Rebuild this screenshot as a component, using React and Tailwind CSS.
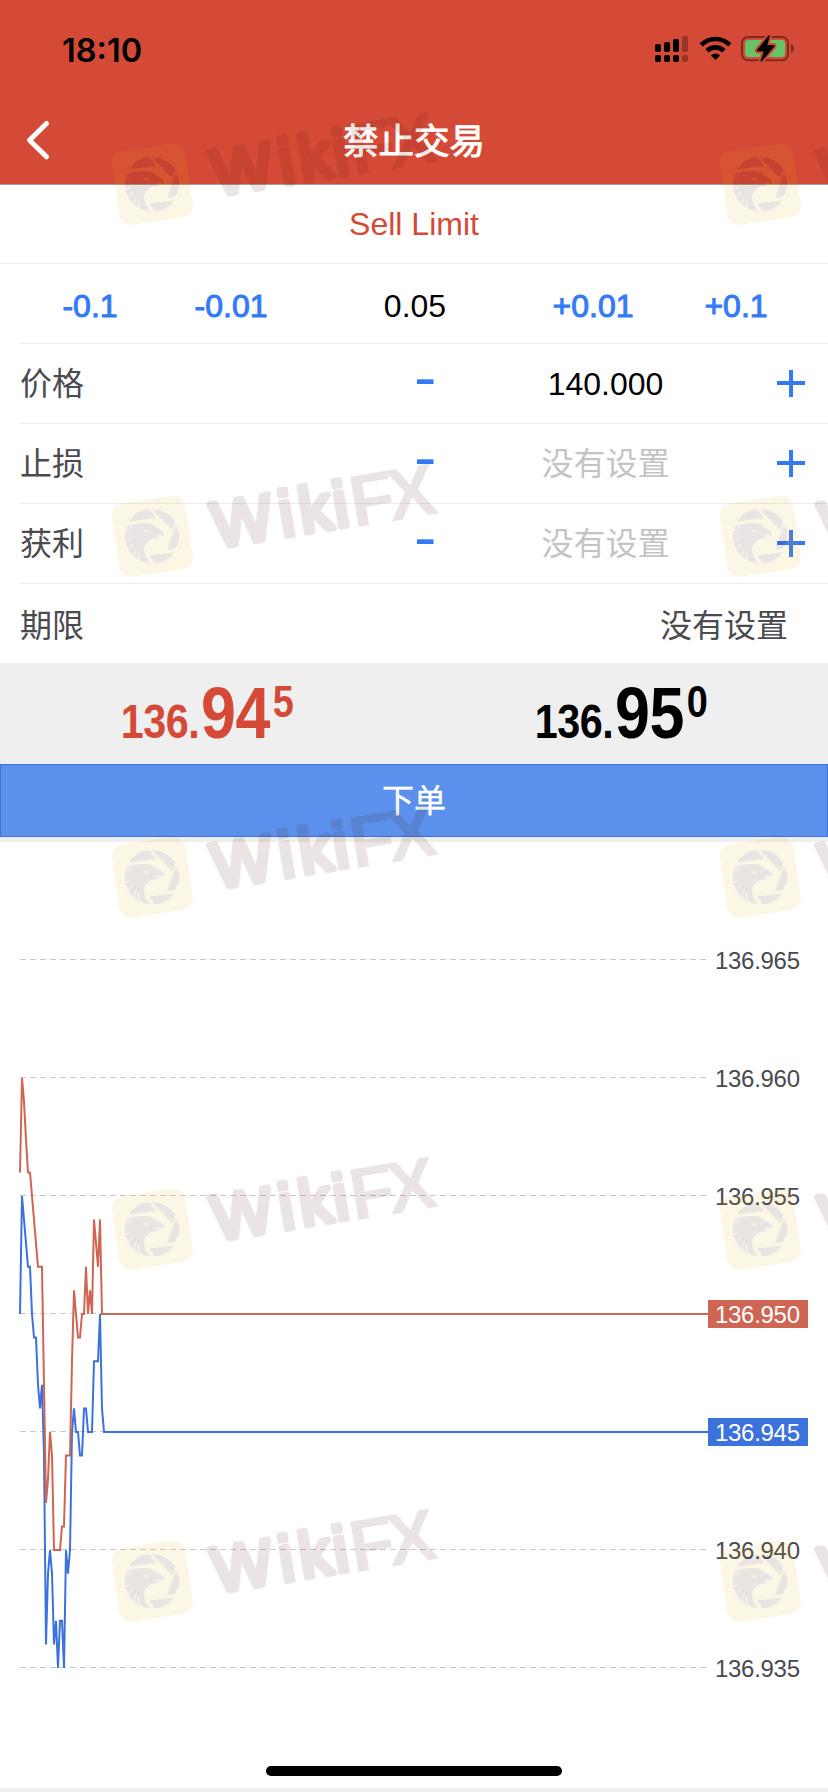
const steps = [
  { label: '-0.1', cell: 'w-[142px]' },
  { label: '-0.01', cell: 'w-[140px]' },
  { label: '0.05', cell: 'w-[228px]', current: true },
  { label: '+0.01', cell: 'w-[128px]' },
  { label: '+0.1', cell: 'w-[158px]' },
];

const fields = [
  { label: '价格', value: '140.000' },
  { label: '止损', value: null },
  { label: '获利', value: null },
];

const levels = [965, 960, 955, 950, 945, 940, 935];

const tags = [
  { v: 950, color: '#cf6553' },
  { v: 945, color: '#3d72dc' },
];

// [x, last three digits of the quote]
const ask = [
  [20, 956], [22, 960], [24, 959], [26, 957.4], [28, 956], [30, 956], [32, 955], [34, 954], [36, 953], [38, 952], [42, 952],
  [44, 947], [46, 942], [48, 943], [50, 945], [52, 944], [54, 940], [60, 940], [62, 941], [64, 941],
  [66, 944], [70, 944], [72, 948], [74, 951], [76, 950], [78, 949], [80, 949], [82, 950], [84, 950],
  [86, 952], [88, 950], [90, 951], [92, 950], [94, 954], [96, 953], [98, 952], [100, 954], [102, 950], [708, 950],
];

const bid = [
  [20, 950], [22, 955], [24, 954], [26, 953], [28, 952], [30, 952], [32, 950], [34, 949], [36, 949],
  [38, 947], [40, 946], [42, 947], [44, 944], [46, 936], [48, 939], [50, 940], [52, 939], [54, 936],
  [56, 937], [58, 935], [60, 937], [62, 937], [64, 935], [66, 940], [68, 939], [70, 940], [72, 945],
  [74, 946], [76, 945], [78, 945], [80, 944], [82, 944], [84, 946], [86, 946], [88, 945], [92, 945],
  [94, 948], [98, 948], [100, 950], [102, 946], [104, 945], [708, 945],
];

const toY = (v) => 472 + (950 - v) * 23.6;
const toPoints = (series) => series.map(([x, v]) => `${x},${toY(v)}`).join(' ');

const StatusIcons = () => (
  <svg width="144" height="32" viewBox="650 34 144 32" className="overflow-visible">
    {[45, 43, 40, 37].map((top, i) => (
      <g key={top} opacity={i === 3 ? 0.28 : 1}>
        <rect x={655 + i * 9} y={top} width="6" height={53 - top} rx="1.8" />
        <rect x={655 + i * 9} y="56" width="6" height="7" rx="1.8" />
      </g>
    ))}
    <g fill="none" stroke="#000" strokeWidth="4.6">
      <path d="M701.2 45.9a20.2 20.2 0 0 1 28.6 0" />
      <path d="M707.1 51.9a11.8 11.8 0 0 1 16.8 0" />
    </g>
    <path d="M715.5 61l-4.6-4.6a6.6 6.6 0 0 1 9.2 0z" />
    <rect x="742" y="38" width="46" height="23.2" rx="6" fill="none" stroke="#7d2b20" strokeWidth="2" />
    <path d="M791 45.3q3 1.2 3 4.3t-3 4.3z" fill="#7d2b20" />
    <rect x="745" y="41" width="40" height="17" rx="3.4" fill="#65c466" />
    <path
      d="M768.5 36.5l-11.600 14.600q-.6 1.300.8 1.300h6l-3.200 9.300q.2 1.700 1.600.4l12.400-14.600q.6-1.500-.8-1.500h-6.400l2.500-8.500q0-2-1.300-1z"
      stroke="#d54a36"
      strokeWidth="4"
      strokeLinejoin="round"
      paintOrder="stroke"
    />
  </svg>
);

const Minus = () => (
  <svg width="17" height="28" viewBox="0 0 17 28" className="shrink-0">
    <rect y="9.300" width="16.500" height="4.700" fill="#347af6" />
  </svg>
);

const Plus = () => (
  <svg width="28" height="28" viewBox="0 0 28 28" className="shrink-0">
    <path d="M0 13h28M14 -1v28" stroke="#347af6" strokeWidth="4" />
  </svg>
);

const Quote = ({ main, big, sup }) => (
  <div className="flex items-baseline justify-center scale-x-[0.86] leading-none font-bold -tracking-[0.5px]">
    <span className="text-[48px]">{main}</span>
    <span className="ml-0.5 text-[73px]">{big}</span>
    <span className="relative -top-[21px] ml-[3px] text-[44px]">{sup}</span>
  </div>
);

const Eagle = () => (
  <g transform="scale(0.3333)" fill="#410f00">
    <path d="M-70 -43Q-49 -79 -9 -82L12 -54Q-30 -52 -70 -43Z" />
    <path d="M-2 -82Q43 -82 69 -45L60 -18Z" />
    <path d="M70 -34Q94 0 68 37L45 40Z" />
    <path d="M-10 57L66 49Q43 80 8 81Z" />
    <path d="M-76 -31Q-48 -42 -12 -39Q10 -35 14 -24Q34 -21 37 0Q28 -6 12 -4Q18 3 24 5Q2 3 -10 13Q-25 24 -25 42Q-23 63 -4 82A82 82 0 0 1 -76 -31Z" />
    <g fill="none" stroke="#ebaf0f" strokeWidth="3" strokeLinecap="round">
      <path d="M-83 -17Q-70 -20 -62 -26" />
      <path d="M-83 17Q-70 13 -63 5" />
      <path d="M-74 42Q-64 34 -59 24" />
      <path d="M-56 62Q-52 50 -49 40" />
      <path d="M-35 77Q-44 62 -42 48" />
    </g>
    <path d="M-28 -20Q-18 -14 -6 -19Q-10 -11 -19 -12Q-25 -13 -28 -20Z" fill="#ebaf0f" />
  </g>
);

const Watermark = ({ x, y, clipped }) => (
  <g transform={`translate(${x} ${y})`} opacity="0.1">
    <rect x="-37" y="-37" width="74" height="74" rx="12" transform="rotate(-8.6)" fill="#ebaf0f" />
    <Eagle />
    <g transform="translate(54.4 16.1) rotate(-9.5)" fill="#410f00" fontFamily="Liberation Sans, Arial, sans-serif">
      <g fontSize="64" stroke="#410f00" strokeWidth="6" strokeLinejoin="round">
        <text x="10" y="-3">W</text>
        {!clipped && (
          <>
            <text x="77.500" y="-3">i</text>
            <text x="98" y="-3">k</text>
            <text x="132.500" y="-3">i</text>
          </>
        )}
      </g>
      {!clipped && (
        <g fontSize="74" fontWeight="700">
          <text x="149">F</text>
          <text x="187">X</text>
        </g>
      )}
    </g>
  </g>
);

const Chart = () => (
  <svg width="828" height="946" viewBox="0 0 828 946" className="block" fontFamily="Liberation Sans, Arial, sans-serif" fontSize="24">
    {levels.map((v) => (
      <path key={v} d={`M20 ${toY(v) - 0.5}H706`} stroke="#c8c8c8" strokeDasharray="6 4" />
    ))}
    {levels.filter((v) => !tags.some((t) => t.v === v)).map((v) => (
      <text key={v} x="715" y={toY(v) + 8.5} textLength="85" fill="#4a4a50">{`136.${v}`}</text>
    ))}
    <g fill="none" strokeWidth="2">
      <polyline points={toPoints(bid)} stroke="#3d72dc" />
      <polyline points={toPoints(ask)} stroke="#cf6553" />
    </g>
    {tags.map((t) => (
      <g key={t.v}>
        <rect x="708" y={toY(t.v) - 14} width="100" height="28" fill={t.color} />
        <text x="715" y={toY(t.v) + 8.5} textLength="85" fill="#fff">{`136.${t.v}`}</text>
      </g>
    ))}
  </svg>
);

export default function App() {
  return (
    <div className="relative flex h-[1792px] w-[828px] flex-col overflow-hidden bg-white font-['Liberation_Sans','Noto_Sans_CJK_SC',sans-serif] text-[32px] text-black">
      <header className="h-[185px] shrink-0 border-b border-[#a39c97] bg-[#d54a36]">
        <div className="flex h-[98px] items-center justify-between pr-[34px] pl-[62px]">
          <span className="pt-1 font-['Inter',sans-serif] text-[32.5px] font-semibold">18:10</span>
          <StatusIcons />
        </div>
        <div className="grid h-[86px] grid-cols-[1fr_auto_1fr] items-center pl-6">
          <svg width="28" height="44" viewBox="24 119 28 44">
            <path d="M46.500 123.500L29.500 140.200L46.500 156.800" fill="none" stroke="#fff" strokeWidth="5" strokeLinecap="round" strokeLinejoin="round" />
          </svg>
          <h1 className="-ml-6 pt-[3px] text-[35.5px] text-white [-webkit-text-stroke:1px]">禁止交易</h1>
        </div>
      </header>

      <div className="flex h-[79px] shrink-0 items-center justify-center border-b border-[#ececec] text-[#d54a36]">Sell Limit</div>

      <div className="ml-5 flex h-20 shrink-0 items-center border-b border-[#ececec]">
        <div className="-ml-px flex pt-1">
          {steps.map((s) => (
            <span
              key={s.label}
              className={`${s.cell} text-center ${s.current ? '' : 'text-[#347af6] [-webkit-text-stroke:1px]'}`}
            >
              {s.label}
            </span>
          ))}
        </div>
      </div>

      {fields.map((f) => (
        <div key={f.label} className="ml-5 flex h-20 shrink-0 items-center border-b border-[#ececec] pr-[23px]">
          <span className="w-[397px] text-[#4a4a50]">{f.label}</span>
          <Minus />
          <span className={`flex-1 text-center ${f.value ? '' : 'text-[#c4c4c6]'}`}>{f.value || '没有设置'}</span>
          <Plus />
        </div>
      ))}

      <div className="ml-5 flex h-[79px] shrink-0 items-center justify-between pt-1 pr-10 text-[#4a4a50]">
        <span>期限</span>
        <span>没有设置</span>
      </div>

      <div className="grid h-[101px] shrink-0 grid-cols-2 items-center bg-[#efefef] pb-[3px]">
        <div className="text-[#d54a36]"><Quote main="136." big="94" sup="5" /></div>
        <div><Quote main="136." big="95" sup="0" /></div>
      </div>

      <button className="flex h-[73px] shrink-0 items-center justify-center border border-[#3f72d8] bg-[#5b91ec] text-white [-webkit-text-stroke:0.4px]">下单</button>
      <div className="h-[5px] shrink-0 bg-[#efefef]" />

      <Chart />

      <div className="h-1 shrink-0 bg-[#efefef]" />
      <div className="absolute bottom-4 left-[266px] h-2.5 w-[296px] rounded-full bg-black" />

      <svg width="828" height="1792" viewBox="0 0 828 1792" className="pointer-events-none absolute inset-0">
        {[184.3, 536.3, 877.3, 1229.3, 1581.3].map((y) => (
          <g key={y}>
            <Watermark x={152.3} y={y} />
            <Watermark x={760.3} y={y} clipped />
          </g>
        ))}
      </svg>
    </div>
  );
}
